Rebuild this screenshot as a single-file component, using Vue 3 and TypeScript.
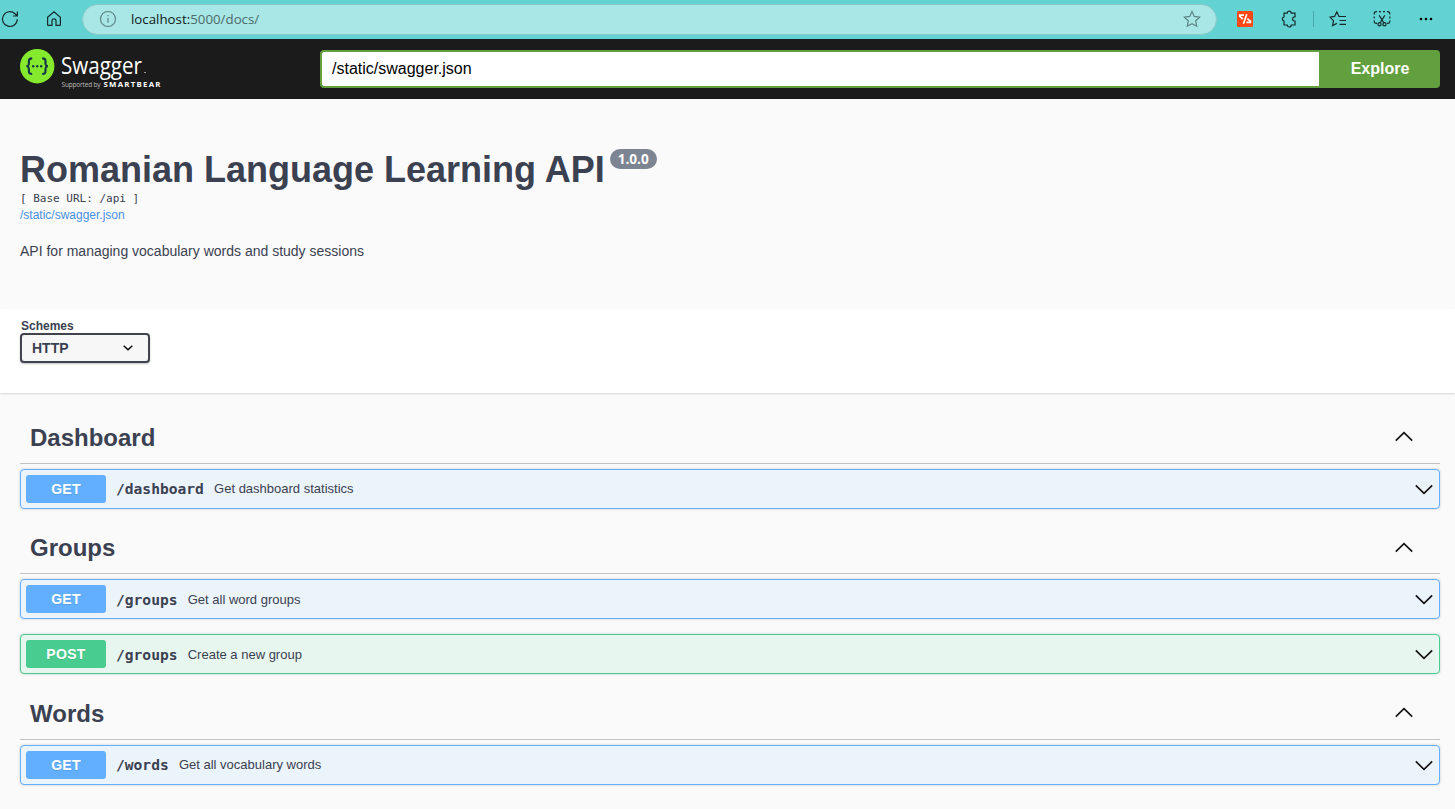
<script setup lang="ts">
interface Operation {
  method: 'get' | 'post'
  path: string
  summary: string
}
interface Tag {
  name: string
  operations: Operation[]
}

const tags: Tag[] = [
  { name: 'Dashboard', operations: [{ method: 'get', path: '/dashboard', summary: 'Get dashboard statistics' }] },
  {
    name: 'Groups',
    operations: [
      { method: 'get', path: '/groups', summary: 'Get all word groups' },
      { method: 'post', path: '/groups', summary: 'Create a new group' },
    ],
  },
  { name: 'Words', operations: [{ method: 'get', path: '/words', summary: 'Get all vocabulary words' }] },
]
</script>

<template>
  <div class="page">
    <header class="browser">
      <svg class="ico reload" width="20" height="20" viewBox="0 0 20 20">
        <path d="M17.3 10.2A7.4 7.4 0 1 1 15 4.7L17.4 7M17.4 2.6V7H13" />
      </svg>
      <svg class="ico home" width="20" height="20" viewBox="0 0 20 20">
        <path d="M3.6 8.2 10 2.8l6.4 5.4v7.6a.6.6 0 0 1-.6.6H12v-4.6a2 2 0 0 0-4 0v4.6H4.2a.6.6 0 0 1-.6-.6z" />
      </svg>
      <div class="address">
        <svg class="ico info-icon" width="18" height="18" viewBox="0 0 18 18">
          <circle cx="9" cy="9" r="7.5" /><path d="M9 8v4.7M9 5v1.2" />
        </svg>
        <span class="url">localhost:<span>5000/docs/</span></span>
        <svg class="ico star" width="18" height="18" viewBox="0 0 18 18">
          <path d="m9 1.5 2.3 4.9 5.4.7-4 3.7 1 5.4L9 13.6l-4.7 2.6 1-5.4-4-3.7 5.4-.7z" />
        </svg>
      </div>
      <svg class="ext" width="16" height="16" viewBox="0 0 16 16">
        <rect width="16" height="16" rx="1.5" fill="#ff4713" />
        <path d="M7 4.2H2.8v1.2L5.8 8M9.8 3.2 6.4 12.8M9.4 11.4h4v-1.2L10.4 7.6" fill="none" stroke="#fff" stroke-width="1.7" />
      </svg>
      <svg class="ico puzzle" width="18" height="18" viewBox="0 0 18 18">
        <path d="M4 3.2h3.2a2 2 0 0 1 4 0H15v3.7h-.8a2.1 2.1 0 0 0 0 4.1h.8v4h-3.8a2 2 0 0 1-4 0H4v-4a2.1 2.1 0 0 1 0-4.1z" />
      </svg>
      <i class="sep"></i>
      <svg class="ico favs" width="18" height="18" viewBox="0 0 18 18">
        <path d="M11 6.5H10L7.8 1.8 5.6 6.4l-4.7.7 3.6 3.6-.9 5L7.8 13.4M10 6.5h7M10.5 10.5H17M10.5 14.3H17" />
      </svg>
      <svg class="ico capture" width="18" height="18" viewBox="0 0 18 18">
        <path d="M1.2 4.5v-1a1.8 1.8 0 0 1 1.8-1.8h1M6 1.7h2M10 1.7h2M14 1.7h1a1.8 1.8 0 0 1 1.8 1.8v1M1.2 6.5v2M16.8 6.5v2M1.2 10.5v1A1.8 1.8 0 0 0 3 13.3h1M16.8 10.5v1a1.8 1.8 0 0 1-1.8 1.8h-1M6.2 5.4l4.6 7.3M11.8 5.4l-4.6 7.3" />
        <circle cx="6.5" cy="14.2" r="1.6" /><circle cx="11.5" cy="14.2" r="1.6" />
      </svg>
      <svg class="more" width="16" height="4" viewBox="0 0 16 4">
        <circle cx="3" cy="2" r="1.3" /><circle cx="8" cy="2" r="1.3" /><circle cx="13" cy="2" r="1.3" />
      </svg>
    </header>

    <div class="topbar">
      <svg class="logo" width="150" height="50" viewBox="0 0 150 50">
        <circle cx="17.2" cy="17.2" r="17.2" fill="#85ea2d" />
        <g fill="none" stroke="#173647" stroke-width="2.2">
          <path d="M12.2 9.4c-2.6 0-3.4.8-3.3 3.1.2 3.1 0 4.3-2.3 4.7 2.3.4 2.5 1.6 2.3 4.7-.1 2.3.7 3.1 3.3 3.1" />
          <path d="M22.2 9.4c2.6 0 3.4.8 3.3 3.1-.2 3.1 0 4.3 2.3 4.7-2.3.4-2.5 1.6-2.3 4.7.1 2.3-.7 3.1-3.3 3.1" />
        </g>
        <g fill="#173647"><circle cx="13.2" cy="17.2" r="1.2" /><circle cx="17.2" cy="17.2" r="1.2" /><circle cx="21.2" cy="17.2" r="1.2" /></g>
        <text class="brand" x="41" y="25" textLength="81" lengthAdjust="spacingAndGlyphs">Swagger</text>
        <rect x="124" y="23" width="2" height="1" fill="#999" />
        <text class="by" x="41.5" y="38" textLength="39">Supported by</text>
        <text class="bear" x="83.5" y="38" textLength="57">SMARTBEAR</text>
      </svg>
      <div class="search">
        <div class="field">/static/swagger.json</div>
        <div class="explore">Explore</div>
      </div>
    </div>

    <section class="info">
      <div class="title-row"><h1>Romanian Language Learning API</h1><span class="version">1.0.0</span></div>
      <div class="base">[ Base URL: /api ]</div>
      <a class="spec">/static/swagger.json</a>
      <p>API for managing vocabulary words and study sessions</p>
    </section>

    <section class="schemes">
      <span class="label">Schemes</span>
      <div class="select">
        <span>HTTP</span>
        <svg width="12" height="8" viewBox="0 0 12 8"><path d="m1.7 1.8 4.3 4 4.3-4" fill="none" stroke="#000" stroke-width="1.5" /></svg>
      </div>
    </section>

    <main>
      <section v-for="tag in tags" :key="tag.name">
        <h2>
          {{ tag.name }}
          <svg width="20" height="20" viewBox="0 0 20 20"><path d="m1.8 13.6 8.2-8 8.2 8" /></svg>
        </h2>
        <div v-for="op in tag.operations" :key="op.method" class="op" :class="op.method">
          <span class="method">{{ op.method.toUpperCase() }}</span>
          <span class="path">{{ op.path }}</span>
          <span class="summary">{{ op.summary }}</span>
          <svg width="20" height="20" viewBox="0 0 20 20"><path d="m1.8 6.4 8.2 8 8.2-8" /></svg>
        </div>
      </section>
    </main>
  </div>
</template>

<style>
body {
  margin: 0;
  overflow: hidden;
}
</style>

<style scoped>
.page {
  box-sizing: border-box;
  height: 809px;
  overflow: hidden;
  background: #fafafa;
  color: #3b4151;
  font-family: "Liberation Sans", Arial, sans-serif;
}
.page * {
  box-sizing: border-box;
}
svg {
  display: block;
  flex: none;
}
.browser {
  display: flex;
  align-items: center;
  height: 39px;
  padding-bottom: 1px;
  background: #62d2d2;
}
.ico {
  fill: none;
  stroke: #17292b;
  stroke-width: 1.2;
}
.home {
  margin-left: 24px;
}
.address {
  display: flex;
  align-items: center;
  width: 1135px;
  height: 31px;
  margin: 1px 0 0 18px;
  padding: 0 15px 1px 16px;
  border: 1px solid #8cc9c9;
  border-radius: 16px;
  background: #a8e7e5;
}
.info-icon,
.star {
  stroke: #5d8484;
}
.url {
  flex: 1;
  margin-left: 14px;
  color: #101818;
  font: 13.3px/20px "Open Sans", sans-serif;
}
.url span {
  color: #4e6a6a;
}
.ext {
  margin-left: 20px;
}
.puzzle {
  margin-left: 27px;
}
.sep {
  width: 1px;
  height: 16px;
  margin-left: 15px;
  background: #4aa5a8;
}
.favs {
  margin-left: 15px;
}
.capture {
  margin-left: 26px;
}
.more {
  margin-left: 27px;
}
.topbar {
  display: flex;
  height: 60px;
  padding: 10px 15px 0 20px;
  background: #1b1b1b;
}
.logo text {
  fill: #fff;
}
.logo .brand {
  font: 23px "Open Sans", sans-serif;
}
.logo .by {
  fill: #bbb;
  font: 6.5px "Open Sans", sans-serif;
}
.logo .bear {
  font: 700 7.8px "Open Sans", sans-serif;
}
.search {
  display: flex;
  width: 1120px;
  height: 38px;
  margin: 1px 0 0 150px;
  font-size: 16px;
}
.field {
  flex: 1;
  padding-left: 10px;
  border: 2px solid #62a03f;
  border-right: 0;
  border-radius: 4px 0 0 4px;
  background: #fff;
  color: #000;
  line-height: 33px;
}
.explore {
  width: 121px;
  padding-left: 1px;
  border-radius: 0 4px 4px 0;
  background: #62a03f;
  color: #fff;
  font-weight: 700;
  line-height: 37px;
  text-align: center;
}
.info {
  height: 210px;
  padding: 50px 20px 0;
}
.title-row {
  display: flex;
  height: 42px;
}
h1 {
  margin: 0;
  font-size: 36px;
  line-height: 42px;
  white-space: nowrap;
}
.version {
  width: 47px;
  height: 20px;
  margin-left: 5px;
  border-radius: 10px;
  background: #7d8492;
  color: #fff;
  font: 700 13.6px/20px "Open Sans", sans-serif;
  text-align: center;
}
.base {
  font: 11px/16px "DejaVu Sans Mono", monospace;
}
.spec {
  display: block;
  color: #4990e2;
  font-size: 12px;
  line-height: 17px;
}
p {
  margin: 19px 0 0;
  font-size: 14px;
  line-height: 17px;
}
.schemes {
  height: 84px;
  padding: 10px 20px 0;
  background: #fff;
  box-shadow: 0 1px 2px rgba(0, 0, 0, 0.15);
}
.label {
  display: block;
  padding-left: 1px;
  font-size: 12px;
  font-weight: 700;
  line-height: 14px;
}
.select {
  display: flex;
  align-items: center;
  justify-content: space-between;
  width: 130px;
  height: 30px;
  padding: 0 14px 0 10px;
  border: 2px solid #41444e;
  border-radius: 4px;
  background: #f7f7f7;
  box-shadow: 0 1px 2px rgba(0, 0, 0, 0.25);
  font-size: 14px;
  font-weight: 700;
}
main {
  padding: 20.4px 15px 0 20px;
}
h2 {
  display: flex;
  align-items: center;
  justify-content: space-between;
  height: 50.5px;
  margin: 0 0 5px;
  padding: 0 26px 1px 10px;
  border-bottom: 1px solid rgba(59, 65, 81, 0.3);
  font-size: 24px;
}
main svg {
  fill: none;
  stroke: #111;
  stroke-width: 1.6;
}
h2 svg {
  margin-bottom: 1px;
}
.op {
  display: flex;
  align-items: center;
  height: 40px;
  margin-bottom: 15px;
  padding: 0 5px;
  border: 1px solid #61affe;
  border-radius: 4px;
  background: #ebf3fb;
  box-shadow: 0 0 3px rgba(0, 0, 0, 0.19);
}
.method {
  width: 80px;
  height: 28px;
  border-radius: 3px;
  background: #61affe;
  color: #fff;
  font-size: 14px;
  font-weight: 700;
  letter-spacing: 0.3px;
  line-height: 28px;
  text-align: center;
  text-shadow: 0 1px 0 rgba(0, 0, 0, 0.1);
}
.path {
  margin: 0.4px 0 0 10px;
  font: 700 14.6px/20px "DejaVu Sans Mono", monospace;
}
.summary {
  flex: 1;
  margin-left: 10.2px;
  font-size: 13px;
}
.post {
  border-color: #49cc90;
  background: #e8f6f0;
}
.post .method {
  background: #49cc90;
}
</style>
